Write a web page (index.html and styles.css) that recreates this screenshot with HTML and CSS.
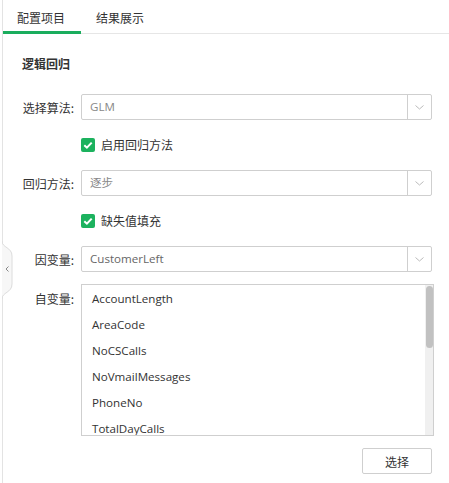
FILE: index.html
```html
<!DOCTYPE html>
<html lang="zh-CN">
<head>
<meta charset="utf-8">
<title>配置项目</title>
<link rel="stylesheet" href="styles.css">
</head>
<body>
<div class="panel">
  <div class="handle">
    <svg width="14" height="58" viewBox="0 0 14 58">
      <path d="M0 0 C0 7 10 6 10 15 L10 43 C10 52 0 51 0 58" fill="#f7f7f7" stroke="#dcdcdc" stroke-width="1"/>
      <path d="M6.5 25.5 L4 28 L6.5 30.5" fill="none" stroke="#888" stroke-width="1"/>
    </svg>
  </div>
  <div class="tabs">
    <div class="tab active">配置项目</div>
    <div class="tab">结果展示</div>
  </div>
  <div class="content">
    <div class="title">逻辑回归</div>
    <div class="row first">
      <label class="label">选择算法:</label>
      <div class="select"><span class="value">GLM</span><span class="arrow"><svg width="9" height="5" viewBox="0 0 9 5"><path d="M0.5 0.5 L4.5 4 L8.5 0.5" fill="none" stroke="#bbb" stroke-width="1"/></svg></span></div>
    </div>
    <div class="check-row">
      <span class="checkbox"><svg width="14" height="14" viewBox="0 0 14 14"><path d="M3.3 7.2 L5.9 9.7 L10.7 4.6" fill="none" stroke="#fff" stroke-width="2"/></svg></span>
      <span class="check-text">启用回归方法</span>
    </div>
    <div class="row">
      <label class="label">回归方法:</label>
      <div class="select"><span class="value">逐步</span><span class="arrow"><svg width="9" height="5" viewBox="0 0 9 5"><path d="M0.5 0.5 L4.5 4 L8.5 0.5" fill="none" stroke="#bbb" stroke-width="1"/></svg></span></div>
    </div>
    <div class="check-row">
      <span class="checkbox"><svg width="14" height="14" viewBox="0 0 14 14"><path d="M3.3 7.2 L5.9 9.7 L10.7 4.6" fill="none" stroke="#fff" stroke-width="2"/></svg></span>
      <span class="check-text">缺失值填充</span>
    </div>
    <div class="row">
      <label class="label">因变量:</label>
      <div class="select"><span class="value dark">CustomerLeft</span><span class="arrow"><svg width="9" height="5" viewBox="0 0 9 5"><path d="M0.5 0.5 L4.5 4 L8.5 0.5" fill="none" stroke="#bbb" stroke-width="1"/></svg></span></div>
    </div>
    <div class="row list-row">
      <label class="label list-label">自变量:</label>
      <div class="list-wrap">
        <div class="listbox">
          <div class="item">AccountLength</div>
          <div class="item">AreaCode</div>
          <div class="item">NoCSCalls</div>
          <div class="item">NoVmailMessages</div>
          <div class="item">PhoneNo</div>
          <div class="item">TotalDayCalls</div>
        </div>
        <div class="scrollbar"><div class="thumb"></div></div>
      </div>
    </div>
    <div class="actions">
      <button class="btn">选择</button>
    </div>
  </div>
</div>
</body>
</html>
```

FILE: styles.css
```css
html, body {
  margin: 0;
  padding: 0;
  background: #fff;
}
body {
  font-family: "Open Sans", "Noto Sans CJK SC", sans-serif;
  font-size: 12px;
  color: #333;
  width: 449px;
  height: 483px;
  overflow: hidden;
}
.panel {
  position: relative;
  margin-left: 2px;
  border-left: 1px solid #e3e3e3;
  height: 483px;
  box-sizing: border-box;
}
.handle {
  position: absolute;
  left: -1px;
  top: 241px;
  width: 14px;
  height: 58px;
  line-height: 0;
}
.tabs {
  display: flex;
  height: 34px;
  box-sizing: border-box;
  border-bottom: 1px solid #e6e6e6;
}
.tab {
  width: 78px;
  box-sizing: border-box;
  padding: 8px 0 3px 14px;
  line-height: 20px;
  height: 34px;
  border-bottom: 3px solid transparent;
  font-family: "Noto Sans CJK SC", sans-serif;
  color: #333;
}
.tab.active {
  border-bottom-color: #1aad5d;
}
.tab + .tab {
  padding-left: 15px;
}
.content {
  padding: 0 17px 0 19px;
}
.title {
  font-family: "Noto Sans CJK SC", sans-serif;
  font-weight: bold;
  line-height: 20px;
  margin-top: 20px;
}
.row {
  display: flex;
  align-items: center;
}
.row.first {
  margin-top: 20px;
}
.label {
  width: 52px;
  margin-right: 7px;
  text-align: right;
  white-space: nowrap;
  font-family: "Noto Sans CJK SC", sans-serif;
  color: #333;
}
.select {
  flex: 1;
  height: 26px;
  box-sizing: border-box;
  border: 1px solid #cfcfcf;
  border-radius: 2px;
  display: flex;
  align-items: center;
}
.value {
  flex: 1;
  padding-left: 8px;
  color: #888;
  line-height: 24px;
  font-size: 11.6px;
}
.value.dark {
  color: #666;
}
.arrow {
  width: 23px;
  height: 24px;
  border-left: 1px solid #cfcfcf;
  display: flex;
  align-items: center;
  justify-content: center;
}
.check-row {
  display: flex;
  align-items: center;
  margin: 18px 0 18px 59px;
  height: 14px;
}
.checkbox {
  width: 14px;
  height: 14px;
  background: #1cb25e;
  border-radius: 2px;
  line-height: 0;
}
.check-text {
  margin-left: 6px;
  font-family: "Noto Sans CJK SC", sans-serif;
  line-height: 14px;
}
.list-row {
  align-items: flex-start;
  margin-top: 12px;
}
.list-label {
  line-height: 26px;
  padding-top: 2px;
}
.list-wrap {
  flex: 1;
  margin-right: -2px;
  position: relative;
}
.listbox {
  height: 152px;
  box-sizing: border-box;
  border: 1px solid #cfcfcf;
  padding-top: 1px;
  overflow: hidden;
}
.scrollbar {
  position: absolute;
  top: 1px;
  right: 1px;
  bottom: 1px;
  width: 8px;
  background: #f0f0f0;
}
.thumb {
  margin: 1px 0 0 1px;
  width: 7px;
  height: 62px;
  border-radius: 4px;
  background: #c1c1c1;
}
.item {
  line-height: 26px;
  padding-left: 10px;
  color: #333;
  font-size: 11.6px;
  white-space: nowrap;
}
.actions {
  display: flex;
  justify-content: flex-end;
  margin-top: 12px;
}
.btn {
  width: 70px;
  height: 26px;
  border: 1px solid #cfcfcf;
  border-radius: 2px;
  background: #fff;
  font-family: "Noto Sans CJK SC", sans-serif;
  font-size: 12px;
  color: #333;
  padding: 0;
}
```
